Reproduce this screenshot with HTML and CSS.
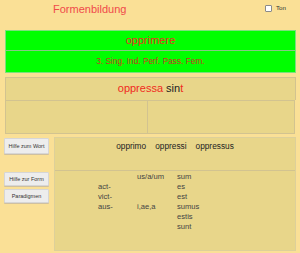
FILE: index.html
```html
<!DOCTYPE html>
<html lang="de">
<head>
<meta charset="utf-8">
<title>Formenbildung</title>
<link rel="stylesheet" href="styles.css">
</head>
<body>
<div class="page">
  <header class="header">
    <h1 class="title">Formenbildung</h1>
    <label class="sound"><span class="check"></span><span class="sound-label">Ton</span></label>
  </header>

  <section class="task">
    <div class="task-word">opprimere</div>
    <div class="task-form">3. Sing. Ind. Perf. Pass. Fem.</div>
  </section>

  <section class="answer">
    <div class="answer-text"><span class="red">oppressa</span> sin<span class="red">t</span></div>
    <div class="answer-cells">
      <div class="cell"></div>
      <div class="cell cell-right"></div>
    </div>
  </section>

  <div class="work">
    <aside class="side">
      <button class="btn btn-tall">Hilfe zum Wort</button>
      <div class="side-group">
        <button class="btn">Hilfe zur Form</button>
        <button class="btn">Paradigmen</button>
      </div>
    </aside>
    <section class="help">
      <div class="stems">
        <span>opprimo</span><span>oppressi</span><span>oppressus</span>
      </div>
      <div class="forms">
        <span class="c1 r2">act-</span>
        <span class="c1 r3">vict-</span>
        <span class="c1 r4">aus-</span>
        <span class="c2 r1">us/a/um</span>
        <span class="c2 r4">i,ae,a</span>
        <span class="c3 r1">sum</span>
        <span class="c3 r2">es</span>
        <span class="c3 r3">est</span>
        <span class="c3 r4">sumus</span>
        <span class="c3 r5">estis</span>
        <span class="c3 r6">sunt</span>
      </div>
    </section>
  </div>
</div>
</body>
</html>
```

FILE: styles.css
```css
html, body {
  margin: 0;
  padding: 0;
  background: #fae096;
}
body {
  font-family: "Liberation Sans", Arial, sans-serif;
  color: #2a2a2a;
  width: 300px;
  height: 253px;
  overflow: hidden;
}
.page {
  display: flex;
  flex-direction: column;
}
.header {
  height: 30px;
  display: flex;
  align-items: flex-start;
  justify-content: space-between;
}
.title {
  margin: 0;
  padding: 3px 0 0 53px;
  font-size: 11px;
  line-height: 13px;
  font-weight: normal;
  color: #f04a4a;
}
.sound {
  display: flex;
  align-items: center;
  gap: 4px;
  margin: 4px 14px 0 0;
  font-size: 6.2px;
  line-height: 8px;
  color: #333;
}
.check {
  width: 5px;
  height: 5px;
  background: #fff;
  border: 1px solid #8a8a8a;
  border-radius: 1px;
}
.task {
  margin-left: 5px;
  width: 289px;
  background: #00ff00;
  border: 1px solid #7ce07c;
}
.task-word {
  height: 19px;
  line-height: 19px;
  text-align: center;
  font-size: 11px;
  color: #ee2a22;
  border-bottom: 1px solid #86c886;
}
.task-form {
  height: 21px;
  line-height: 21px;
  text-align: center;
  font-size: 8.3px;
  color: #cc3322;
}
.answer {
  margin: 4px 0 0 5px;
  width: 291px;
}
.answer-text {
  height: 22px;
  line-height: 21px;
  text-align: center;
  font-size: 11px;
  background: #e8d68a;
  border: 1px solid #d2c390;
  border-bottom: none;
  color: #222;
}
.red { color: #f02a1e; }
.answer-cells {
  display: flex;
  height: 34px;
}
.cell {
  width: 141px;
  background: #e8d68a;
  border: 1px solid #d2c390;
}
.cell-right {
  width: 146px;
  border-left: none;
}
.work {
  display: flex;
  margin-top: 3px;
}
.side {
  width: 54px;
  display: flex;
  flex-direction: column;
  padding-top: 1px;
}
.side-group {
  display: flex;
  flex-direction: column;
  gap: 3px;
  margin-top: 18px;
}
.btn {
  margin: 0 0 0 4px;
  width: 45px;
  height: 14px;
  padding: 0;
  font-family: "Liberation Sans", Arial, sans-serif;
  font-size: 5.5px;
  color: #333;
  background: #ededed;
  border: 1px solid #d6d6d6;
  border-radius: 1px;
  box-shadow: 0 1px 0 #cfc0a0;
}
.btn-tall { height: 16px; }
.help {
  width: 240px;
  height: 112px;
  background: #e8d68a;
  border: 1px solid #ddd09a;
  display: flex;
  flex-direction: column;
}
.stems {
  height: 33px;
  border-bottom: 1px solid #d2c390;
  display: flex;
  justify-content: center;
  gap: 9px;
  padding-top: 3px;
  box-sizing: border-box;
  font-size: 8.3px;
  line-height: 10px;
  color: #222;
}
.forms {
  display: grid;
  grid-template-columns: 39px 40px auto;
  grid-template-rows: repeat(6, 10px);
  padding: 1px 0 0 43px;
  font-size: 7.6px;
  line-height: 10px;
  color: #444;
}
.c1 { grid-column: 1; }
.c2 { grid-column: 2; }
.c3 { grid-column: 3; }
.r1 { grid-row: 1; }
.r2 { grid-row: 2; }
.r3 { grid-row: 3; }
.r4 { grid-row: 4; }
.r5 { grid-row: 5; }
.r6 { grid-row: 6; }
```
